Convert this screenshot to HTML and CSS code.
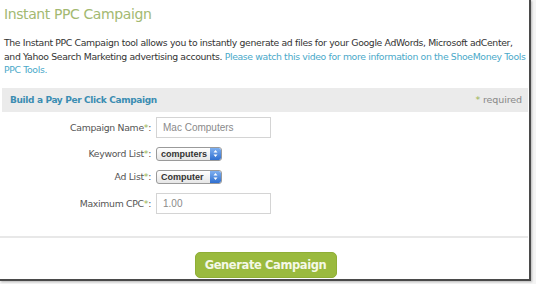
FILE: index.html
```html
<!DOCTYPE html>
<html>
<head>
<meta charset="utf-8">
<link rel="stylesheet" href="styles.css">
</head>
<body>
<div class="frame">
  <h1 class="title">Instant PPC Campaign</h1>
  <p class="intro">The Instant PPC Campaign tool allows you to instantly generate ad files for your Google AdWords, Microsoft adCenter,<br>and Yahoo Search Marketing advertising accounts. <a class="link" href="#">Please watch this video for more information on the ShoeMoney Tools<br>PPC Tools.</a></p>
  <div class="bar">
    <span class="bar-title">Build a Pay Per Click Campaign</span>
    <span class="req"><span class="star">*</span> required</span>
  </div>
  <div class="form">
    <label class="lbl">Campaign Name<span class="star">*</span>:</label>
    <div class="field"><div class="input">Mac Computers</div></div>
    <label class="lbl">Keyword List<span class="star">*</span>:</label>
    <div class="field"><div class="select"><span class="sel-text">computers</span><span class="step"><svg width="5" height="9" viewBox="0 0 5 9"><path d="M0.5 3.5 L2.5 1 L4.5 3.5Z M0.5 5.5 L2.5 8 L4.5 5.5Z" fill="#fff"/></svg></span></div></div>
    <label class="lbl">Ad List<span class="star">*</span>:</label>
    <div class="field"><div class="select"><span class="sel-text">Computer</span><span class="step"><svg width="5" height="9" viewBox="0 0 5 9"><path d="M0.5 3.5 L2.5 1 L4.5 3.5Z M0.5 5.5 L2.5 8 L4.5 5.5Z" fill="#fff"/></svg></span></div></div>
    <label class="lbl">Maximum CPC<span class="star">*</span>:</label>
    <div class="field"><div class="input">1.00</div></div>
  </div>
  <div class="sep"></div>
  <div class="actions"><button class="btn">Generate Campaign</button></div>
</div>
</body>
</html>
```

FILE: styles.css
```css
html, body {
  margin: 0;
  padding: 0;
  background: #f4f4f4;
}
body {
  font-family: "DejaVu Sans", "Liberation Sans", sans-serif;
  width: 536px;
  height: 284px;
  overflow: hidden;
}
.frame {
  box-sizing: border-box;
  width: 531px;
  height: 281px;
  background: #fff;
  padding: 0 3px 0 4px;
  border-right: 2px solid #4a4a4a;
  border-bottom: 2px solid #4a4a4a;
  box-shadow: 1px 1px 2px rgba(0,0,0,0.25);
}
.title {
  margin: 0;
  padding-top: 5px;
  font-size: 14px;
  line-height: 18px;
  letter-spacing: -0.4px;
  font-weight: normal;
  color: #a3b971;
}
.intro {
  margin: 13px 0 0 0;
  font-size: 9.3px;
  line-height: 13.5px;
  letter-spacing: -0.35px;
  white-space: nowrap;
  color: #333;
}
.link {
  color: #4aa9c9;
  text-decoration: none;
}
.bar {
  margin: 11px -2px 0 -2px;
  height: 24px;
  background: #ebebeb;
  display: flex;
  align-items: center;
  justify-content: space-between;
  padding: 0 6px 0 8px;
}
.bar-title {
  font-size: 9px;
  font-weight: bold;
  letter-spacing: -0.35px;
  color: #3b8db2;
}
.req {
  font-size: 9.5px;
  letter-spacing: -0.1px;
  color: #888;
}
.star {
  color: #9ab452;
}
.form {
  display: grid;
  grid-template-columns: 147px auto;
  column-gap: 5px;
  row-gap: 9px;
  margin-top: 5px;
  align-items: center;
}
.lbl {
  text-align: right;
  font-size: 9.3px;
  letter-spacing: -0.3px;
  color: #555;
}
.field {
  display: flex;
}
.input {
  box-sizing: border-box;
  width: 115px;
  height: 21px;
  border: 1px solid #d4d4d4;
  font-family: "Liberation Sans", sans-serif;
  font-size: 10px;
  color: #8a8a8a;
  padding: 0 6px;
  display: flex;
  align-items: center;
}
.select {
  box-sizing: border-box;
  width: 66px;
  height: 14px;
  border: 1px solid #9a9a9a;
  border-radius: 3px;
  background: linear-gradient(#ffffff, #e6e6e6);
  display: flex;
  align-items: center;
  justify-content: space-between;
  padding-left: 4px;
  overflow: hidden;
}
.sel-text {
  font-family: "Liberation Sans", sans-serif;
  font-size: 9px;
  font-weight: bold;
  color: #333;
}
.step {
  width: 11px;
  height: 12px;
  background: linear-gradient(#7fb0f0, #2f6fd0);
  border-radius: 0 2px 2px 0;
  display: flex;
  align-items: center;
  justify-content: center;
}
.sep {
  margin: 22px -2px 0 -4px;
  height: 2px;
  background: #e8e8e8;
}
.actions {
  display: flex;
  justify-content: center;
  margin-top: 14px;
}
.btn {
  width: 142px;
  height: 26px;
  border: 1px solid #8fae36;
  border-radius: 5px;
  background: #9aba3e;
  color: #f4f8e6;
  font-family: "DejaVu Sans", "Liberation Sans", sans-serif;
  font-size: 11.5px;
  font-weight: bold;
  letter-spacing: -0.4px;
  padding: 0;
  margin-left: 1px;
}
```
